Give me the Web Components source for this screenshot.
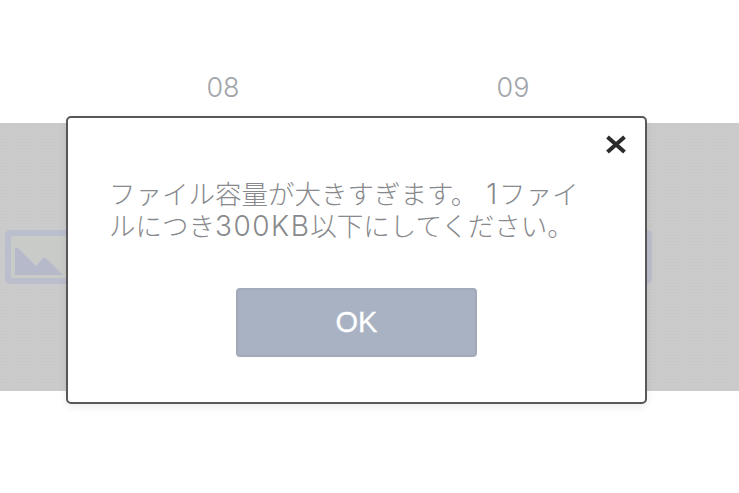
<!DOCTYPE html>
<html lang="ja">
<head>
<meta charset="utf-8">
<style>
html, body { margin: 0; background: #fff; }
</style>
</head>
<body>
<upload-page>
	<hour-row slot="hours"><span>08</span><span>09</span></hour-row>
	<photo-band slot="band"></photo-band>
	<alert-dialog slot="dialog" label="OK">
		<msg-line>ファイル容量が大きすぎます。<latin-run lead>1</latin-run>ファイ</msg-line>
		<msg-line>ルにつき<latin-run>300KB</latin-run>以下にしてください。</msg-line>
	</alert-dialog>
</upload-page>
<script>
class UploadPage extends HTMLElement {
	constructor() {
		super().attachShadow({ mode: "open" }).innerHTML = `
<style>
:host {
	display: block;
	position: relative;
	width: 739px;
	height: 493px;
	overflow: hidden;
	padding-top: 70px;
	box-sizing: border-box;
}
</style>
<slot name="hours"></slot>
<slot name="band"></slot>
<slot name="dialog"></slot>`;
	}
}
customElements.define("upload-page", UploadPage);

class HourRow extends HTMLElement {
	constructor() {
		super().attachShadow({ mode: "open" }).innerHTML = `
<style>
:host {
	display: grid;
	grid-template-columns: 290px 290px;
	padding-left: 78px;
	height: 53px;
	font: 300 27px/35px Inter, "Liberation Sans", sans-serif;
	color: #a2a5aa;
	text-align: center;
}
</style>
<slot></slot>`;
	}
}
customElements.define("hour-row", HourRow);

class PhotoBand extends HTMLElement {
	constructor() {
		super().attachShadow({ mode: "open" }).innerHTML = `
<style>
:host {
	display: flex;
	align-items: flex-start;
	gap: 223px;
	height: 268px;
	padding: 107px 0 0 5px;
	box-sizing: border-box;
	background-color: #cbcbcb;
	background-image: radial-gradient(#c6c6c6 0.6px, transparent 0.7px);
	background-size: 3px 3px;
}
svg { display: block; flex: none; }
</style>
${`<svg width="67" height="54" viewBox="0 0 67 54" aria-hidden="true">
	<rect x="3" y="3" width="61" height="48" rx="2" fill="#c9cbc9" stroke="#bbbecc" stroke-width="6"/>
	<path d="M10 18 L13 18 L31 36 L38 28 L41 28 L58 45 L10 45 Z" fill="#b6b9ca"/>
</svg>`.repeat(3)}`;
	}
}
customElements.define("photo-band", PhotoBand);

class MsgLine extends HTMLElement {
	constructor() {
		super().attachShadow({ mode: "open" }).innerHTML = `<style>
:host {
	display: block;
	height: 32px;
	white-space: nowrap;
}
</style><slot></slot>`;
	}
}
customElements.define("msg-line", MsgLine);

// digits and capitals run wider than the kana around them
// no whitespace in the shadow markup: it would show as a gap in an inline host
class LatinRun extends HTMLElement {
	constructor() {
		super().attachShadow({ mode: "open" }).innerHTML = `<style>
:host {
	display: inline;
	font-size: 28px;
	letter-spacing: 1.5px;
}
:host([lead]) {
	padding-left: 9px;
}
</style><slot></slot>`;
	}
}
customElements.define("latin-run", LatinRun);

class AlertDialog extends HTMLElement {
	constructor() {
		super().attachShadow({ mode: "open" }).innerHTML = `
<style>
:host {
	position: absolute;
	left: 66px;
	top: 116px;
	width: 581px;
	height: 288px;
	box-sizing: border-box;
	display: flex;
	flex-direction: column;
	background: #fff;
	border: 2px solid #58585a;
	border-radius: 5px;
	box-shadow: 0 3px 8px rgba(0, 0, 0, 0.08);
	padding: 17px 18px 0 41px;
}
header {
	display: flex;
	justify-content: flex-end;
}
header svg { display: block; }
.message {
	margin-top: 23px;
	height: 64px;
	font: 300 26.5px/32px Inter, "Noto Sans CJK JP", sans-serif;
	text-autospace: no-autospace;
	color: #88898c;
}
button {
	appearance: none;
	display: block;
	width: 241px;
	height: 69px;
	margin: 46px 0 0 127px;
	padding: 0;
	box-sizing: border-box;
	background: #a9b2c3;
	border: 2px solid #a2aaba;
	border-radius: 4px;
	color: #fff;
	font: 400 29px/1 "Liberation Sans", sans-serif;
	-webkit-text-stroke: 0.3px #fff;
}
</style>
<header>
	<svg width="22" height="20" viewBox="0 0 22 20" aria-hidden="true">
		<path d="M2.5 2 L19.5 17 M19.5 2 L2.5 17" stroke="#2b2b2b" stroke-width="4" fill="none"/>
	</svg>
</header>
<div class="message"><slot></slot></div>
<button></button>`;
		this.shadowRoot.querySelector("button").textContent = this.getAttribute("label");
	}
}
customElements.define("alert-dialog", AlertDialog);
</script>
</body>
</html>
